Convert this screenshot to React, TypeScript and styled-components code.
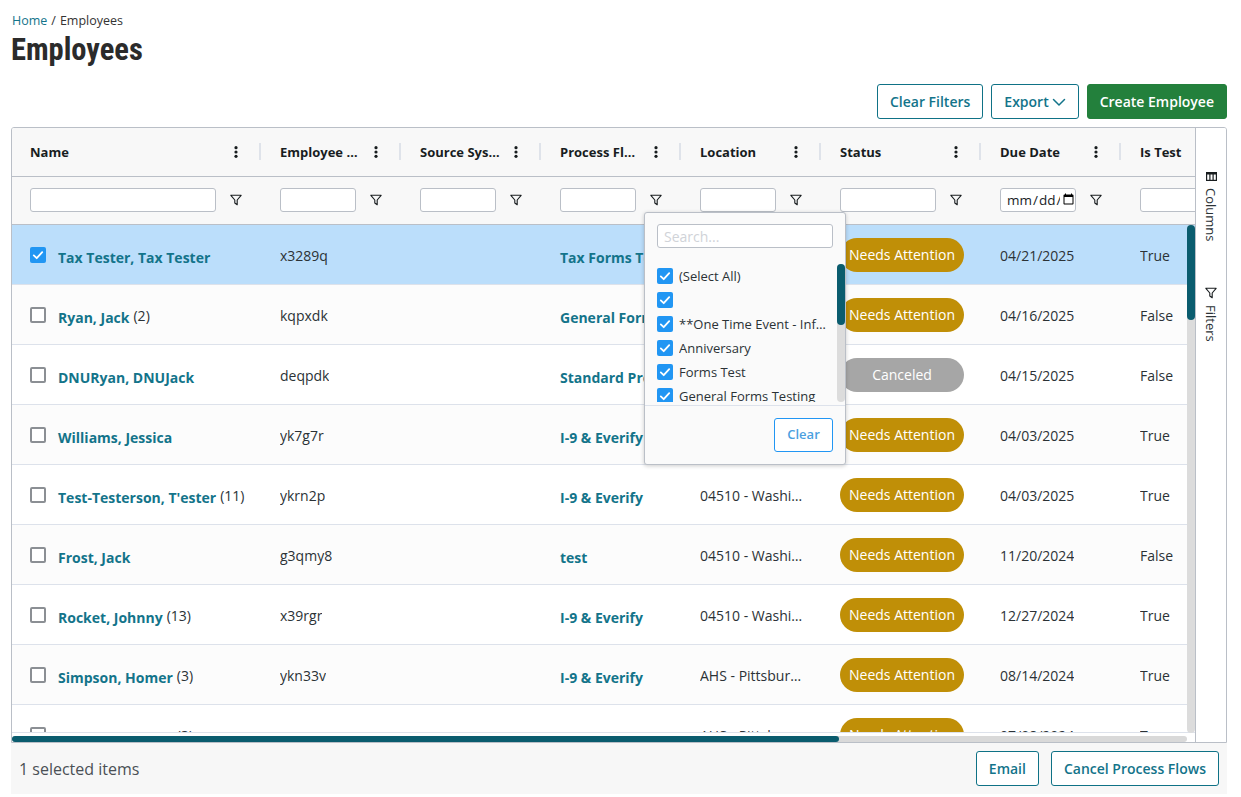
import React from "react";
import styled, { createGlobalStyle } from "styled-components";

const GlobalStyle = createGlobalStyle`
  html, body {
    margin: 0;
    padding: 0;
    background: #fff;
    font-family: "Open Sans", "Noto Sans", sans-serif;
    color: #2b2f33;
  }
  * { box-sizing: border-box; }
`;

const Page = styled.div`
  width: 1241px;
  height: 797px;
  padding: 13px 14px 0 11px;
  overflow: hidden;
`;

const Breadcrumb = styled.div`
  height: 16px;
  padding-left: 1px;
  font-size: 12.5px;
  line-height: 16px;
  display: flex;
  gap: 4px;
  color: #333;
`;

const Crumb = styled.a`
  color: #13748a;
`;

const Title = styled.h1`
  margin: 1px 0 0;
  height: 40px;
  font-family: "Roboto", "Open Sans", sans-serif;
  font-stretch: condensed;
  font-size: 30.5px;
  line-height: 40px;
  font-weight: 700;
  color: #2b2b2b;
`;

const Toolbar = styled.div`
  margin-top: 14px;
  height: 35px;
  display: flex;
  justify-content: flex-end;
  gap: 8px;
`;

const Button = styled.button<{ $primary?: boolean }>`
  height: 35px;
  padding: 0 12px;
  display: inline-flex;
  align-items: center;
  gap: 4px;
  font-family: inherit;
  font-size: 14px;
  font-weight: 600;
  border-radius: 3px;
  border: 1px solid ${(p) => (p.$primary ? "#23803c" : "#0f7286")};
  background: ${(p) => (p.$primary ? "#23803c" : "#fff")};
  color: ${(p) => (p.$primary ? "#fff" : "#13748a")};
`;

const Chevron = styled.svg`
  margin-left: -1px;
`;

const Frame = styled.div`
  position: relative;
  margin-top: 8px;
  height: 616px;
  display: flex;
  border: 1px solid #babfc7;
  border-radius: 3px 3px 0 0;
  overflow: hidden;
`;

const GridArea = styled.div`
  position: relative;
  width: 1183px;
  flex: none;
  overflow: hidden;
  display: flex;
  flex-direction: column;
`;

const HeadRow = styled.div`
  display: flex;
  flex: none;
  width: max-content;
  height: 49px;
  background: #f8f8f8;
  border-bottom: 1px solid #babfc7;
`;

const FilterRow = styled.div`
  display: flex;
  flex: none;
  width: max-content;
  height: 48px;
  padding-bottom: 2px;
  background: #f8f8f8;
  border-bottom: 1px solid #babfc7;
`;

const HeadCell = styled.div<{ $w: number }>`
  position: relative;
  width: ${(p) => p.$w}px;
  flex: none;
  padding: 0 14px 0 18px;
  display: flex;
  align-items: center;
  font-size: 13px;
  font-weight: 700;
  color: #181d1f;

  &::after {
    content: "";
    position: absolute;
    right: 1px;
    top: 15px;
    width: 2px;
    height: 17px;
    background: #dfe3ea;
  }
`;

const HeadLabel = styled.span`
  flex: 1;
  min-width: 0;
  white-space: nowrap;
  overflow: hidden;
  text-overflow: ellipsis;
`;

const IconSlot = styled.span`
  flex: none;
  width: 20px;
  margin-left: 6px;
  margin-right: 2px;
  display: flex;
  justify-content: center;
  align-items: center;
`;

const FilterCell = styled.div<{ $w: number }>`
  width: ${(p) => p.$w}px;
  flex: none;
  padding: 0 14px 0 18px;
  display: flex;
  align-items: center;
`;

const FilterSlot = styled(IconSlot)`
  margin-left: 10px;
`;

const TextFilter = styled.input`
  flex: 1;
  min-width: 0;
  height: 24px;
  padding: 0 0 0 5px;
  font-family: inherit;
  font-size: 13.5px;
  color: #181d1f;
  background: #fff;
  border: 1px solid #babfc7;
  border-radius: 3px;
  outline: none;

  &::-webkit-calendar-picker-indicator {
    margin-left: 0;
    margin-right: -2px;
  }
`;

const Body = styled.div`
  flex: none;
  height: 508px;
  overflow: hidden;
  border-bottom: 1px solid #dde2eb;
`;

const Row = styled.div<{ $selected?: boolean; $odd?: boolean }>`
  display: flex;
  width: max-content;
  height: 60px;
  border-bottom: 1px solid #dde2eb;
  background: ${(p) => (p.$selected ? "#bbdefb" : p.$odd ? "#fcfcfc" : "#fff")};
`;

const Cell = styled.div<{ $w: number }>`
  width: ${(p) => p.$w}px;
  flex: none;
  padding: 0 18px;
  height: 59px;
  display: flex;
  align-items: center;
  font-size: 14px;
  white-space: nowrap;
  overflow: hidden;
  color: #2b3236;
`;

const CellText = styled.span`
  margin-top: 2px;
  overflow: hidden;
  text-overflow: ellipsis;
`;

const Check = styled.span<{ $on?: boolean }>`
  width: 16px;
  height: 16px;
  flex: none;
  display: inline-flex;
  align-items: center;
  justify-content: center;
  border-radius: 2px;
  background: ${(p) => (p.$on ? "#2196f3" : "#fff")};
  border: ${(p) => (p.$on ? "none" : "2px solid #8b8f94")};
`;

const RowLink = styled.a`
  margin-top: 6px;
  font-weight: 700;
  color: #13748a;
`;

const NameLink = styled(RowLink)`
  margin-left: 12px;
`;

const Count = styled.span`
  margin-top: 2px;
  margin-left: 4px;
  font-size: 14px;
`;

const Pill = styled.span<{ $gray?: boolean }>`
  width: 124px;
  height: 34px;
  flex: none;
  border-radius: 17px;
  display: flex;
  align-items: center;
  justify-content: center;
  font-size: 14px;
  color: #fff;
  background: ${(p) => (p.$gray ? "#a6a6a6" : "#c08f07")};
`;

const VTrack = styled.div`
  position: absolute;
  top: 97px;
  right: 0;
  width: 8px;
  height: 508px;
  border-radius: 4px;
  background: #dcdcdc;
`;

const VThumb = styled.div`
  width: 8px;
  height: 95px;
  border-radius: 4px;
  background: #0a5c6e;
`;

const HTrack = styled.div`
  position: absolute;
  left: 0;
  bottom: 0;
  width: 1175px;
  height: 6px;
  border-radius: 3px;
  background: #d9d9d9;
`;

const HThumb = styled.div`
  width: 827px;
  height: 6px;
  border-radius: 3px;
  background: #0a5c6e;
`;

const SideBar = styled.div`
  flex: 1;
  border-left: 1px solid #babfc7;
  background: #fff;
  display: flex;
  flex-direction: column;
  align-items: center;
  padding-top: 43px;
  gap: 46px;
`;

const SideTab = styled.div`
  writing-mode: vertical-rl;
  display: flex;
  align-items: center;
  gap: 6px;
  font-size: 13px;
  color: #2b3236;
`;

const Footer = styled.div`
  height: 51px;
  background: #f7f7f7;
  padding: 8px 8px 8px 8px;
  display: flex;
  align-items: center;
  gap: 12px;
`;

const SelectedText = styled.span`
  flex: 1;
  font-size: 16px;
  color: #4a5055;
`;

const Popup = styled.div`
  position: absolute;
  left: 632px;
  top: 84px;
  width: 202px;
  height: 253px;
  background: #fafafa;
  border: 1px solid #babfc7;
  border-radius: 3px;
  box-shadow: 0 1px 4px rgba(0, 0, 0, 0.2);
  z-index: 3;
  display: flex;
  flex-direction: column;
`;

const PopupSearch = styled.input`
  display: block;
  margin: 11px 12px 16px;
  height: 24px;
  flex: none;
  padding: 0 6px;
  font-family: inherit;
  font-size: 14px;
  background: #fff;
  border: 1px solid #babfc7;
  border-radius: 3px;
  outline: none;

  &::placeholder {
    color: #d0d3d8;
  }
`;

const PopupList = styled.div`
  position: relative;
  height: 138px;
  flex: none;
  overflow: hidden;
`;

const PopupItem = styled.div`
  height: 24px;
  padding-left: 12px;
  display: flex;
  align-items: center;
  gap: 6px;
  font-size: 13px;
  color: #2b3236;
  white-space: nowrap;
`;

const ItemLabel = styled.span`
  width: 148px;
  overflow: hidden;
  text-overflow: ellipsis;
`;

const ListTrack = styled.div`
  position: absolute;
  top: 0;
  right: 0;
  width: 8px;
  height: 138px;
  border-radius: 4px;
  background: #dcdcdc;
`;

const ListThumb = styled.div`
  width: 8px;
  height: 61px;
  border-radius: 4px;
  background: #0a5c6e;
`;

const PopupFooter = styled.div`
  margin-top: 3px;
  flex: 1;
  border-top: 1px solid #dde2eb;
  padding: 12px 12px 0;
  display: flex;
  justify-content: flex-end;
  align-items: flex-start;
`;

const ClearButton = styled.button`
  width: 59px;
  height: 34px;
  padding: 0 0 2px;
  font-family: inherit;
  font-size: 13px;
  font-weight: 600;
  color: #4b9fe0;
  background: #fff;
  border: 1px solid #2196f3;
  border-radius: 3px;
`;

const FunnelIcon = () => (
  <svg width="12" height="12" viewBox="0 0 14 14" fill="none" stroke="#181d1f" strokeWidth="1.3" strokeLinejoin="round">
    <path d="M1 1.5h12L8.4 7v5.5L5.6 10.5V7z" />
  </svg>
);

const DotsIcon = () => (
  <svg width="4" height="12" viewBox="0 0 4 12" fill="#181d1f">
    <circle cx="2" cy="1.7" r="1.6" />
    <circle cx="2" cy="6" r="1.6" />
    <circle cx="2" cy="10.3" r="1.6" />
  </svg>
);

const Tick = () => (
  <svg width="12" height="12" viewBox="0 0 12 12" fill="none" stroke="#fff" strokeWidth="1.8" strokeLinecap="round" strokeLinejoin="round">
    <path d="M1.8 6.4l2.9 2.8 5.5-6" />
  </svg>
);

type Employee = {
  name: string;
  count?: number;
  id: string;
  flow: string;
  location: string;
  status: string;
  due: string;
  isTest: string;
  selected?: boolean;
};

const widths = [250, 140, 140, 140, 140, 160, 140, 140];
const heads = ["Name", "Employee ID", "Source System", "Process Flow", "Location", "Status", "Due Date", "Is Test"];

const employees: Employee[] = [
  { name: "Tax Tester, Tax Tester", id: "x3289q", flow: "Tax Forms Test", location: "04510 - Washington", status: "Needs Attention", due: "04/21/2025", isTest: "True", selected: true },
  { name: "Ryan, Jack", count: 2, id: "kqpxdk", flow: "General Forms", location: "04510 - Washington", status: "Needs Attention", due: "04/16/2025", isTest: "False" },
  { name: "DNURyan, DNUJack", id: "deqpdk", flow: "Standard Process", location: "04510 - Washington", status: "Canceled", due: "04/15/2025", isTest: "False" },
  { name: "Williams, Jessica", id: "yk7g7r", flow: "I-9 & Everify", location: "04510 - Washington", status: "Needs Attention", due: "04/03/2025", isTest: "True" },
  { name: "Test-Testerson, T'ester", count: 11, id: "ykrn2p", flow: "I-9 & Everify", location: "04510 - Washington", status: "Needs Attention", due: "04/03/2025", isTest: "True" },
  { name: "Frost, Jack", id: "g3qmy8", flow: "test", location: "04510 - Washington", status: "Needs Attention", due: "11/20/2024", isTest: "False" },
  { name: "Rocket, Johnny", count: 13, id: "x39rgr", flow: "I-9 & Everify", location: "04510 - Washington", status: "Needs Attention", due: "12/27/2024", isTest: "True" },
  { name: "Simpson, Homer", count: 3, id: "ykn33v", flow: "I-9 & Everify", location: "AHS - Pittsburgh", status: "Needs Attention", due: "08/14/2024", isTest: "True" },
  { name: "Simpson, Homer", count: 3, id: "xqmrwz", flow: "test", location: "AHS - Pittsburgh", status: "Needs Attention", due: "07/08/2024", isTest: "True" },
];

const filterValues = ["(Select All)", "", "**One Time Event - Informational", "Anniversary", "Forms Test", "General Forms Testing"];

const App: React.FC = () => {
  return (
    <Page>
      <GlobalStyle />
      <Breadcrumb>
        <Crumb>Home</Crumb>
        <span>/</span>
        <span>Employees</span>
      </Breadcrumb>
      <Title>Employees</Title>
      <Toolbar>
        <Button>Clear Filters</Button>
        <Button>
          Export
          <Chevron width="14" height="14" viewBox="0 0 14 14" fill="none" stroke="#13748a" strokeWidth="1.5" strokeLinecap="round" strokeLinejoin="round">
            <path d="M1.5 4.5L7 10l5.5-5.5" />
          </Chevron>
        </Button>
        <Button $primary>Create Employee</Button>
      </Toolbar>
      <Frame>
        <GridArea>
          <HeadRow>
            {heads.map((h, i) => (
              <HeadCell key={h} $w={widths[i]}>
                <HeadLabel>{h}</HeadLabel>
                <IconSlot>
                  <DotsIcon />
                </IconSlot>
              </HeadCell>
            ))}
          </HeadRow>
          <FilterRow>
            {heads.map((h, i) => (
              <FilterCell key={h} $w={widths[i]}>
                <TextFilter type={h === "Due Date" ? "date" : "text"} />
                <FilterSlot>
                  <FunnelIcon />
                </FilterSlot>
              </FilterCell>
            ))}
          </FilterRow>
          <Body>
            {employees.map((e, i) => (
              <Row key={e.id} $selected={e.selected} $odd={i % 2 === 1}>
                <Cell $w={widths[0]}>
                  <Check $on={e.selected}>{e.selected && <Tick />}</Check>
                  <NameLink>{e.name}</NameLink>
                  {e.count !== undefined && <Count>({e.count})</Count>}
                </Cell>
                <Cell $w={widths[1]}>
                  <CellText>{e.id}</CellText>
                </Cell>
                <Cell $w={widths[2]} />
                <Cell $w={widths[3]}>
                  <RowLink>{e.flow}</RowLink>
                </Cell>
                <Cell $w={widths[4]}>
                  <CellText>{e.location}</CellText>
                </Cell>
                <Cell $w={widths[5]}>
                  <Pill $gray={e.status === "Canceled"}>{e.status}</Pill>
                </Cell>
                <Cell $w={widths[6]}>
                  <CellText>{e.due}</CellText>
                </Cell>
                <Cell $w={widths[7]}>
                  <CellText>{e.isTest}</CellText>
                </Cell>
              </Row>
            ))}
          </Body>
          <VTrack>
            <VThumb />
          </VTrack>
          <HTrack>
            <HThumb />
          </HTrack>
        </GridArea>
        <SideBar>
          <SideTab>
            <svg width="11" height="11" viewBox="0 0 11 11" fill="none" stroke="#181d1f" strokeWidth="1.2">
              <rect x="0.6" y="1.6" width="9.8" height="7.8" />
              <path d="M0.6 2.6h9.8" strokeWidth="2" />
              <path d="M3.9 2v7.4M7.1 2v7.4" />
            </svg>
            Columns
          </SideTab>
          <SideTab>
            <svg width="12" height="12" viewBox="0 0 14 14" fill="none" stroke="#181d1f" strokeWidth="1.3" strokeLinejoin="round">
              <path d="M1 1.5h12L8.4 7v5.5L5.6 10.5V7z" />
            </svg>
            Filters
          </SideTab>
        </SideBar>
        <Popup>
          <PopupSearch placeholder="Search..." />
          <PopupList>
            {filterValues.map((v) => (
              <PopupItem key={v}>
                <Check $on>
                  <Tick />
                </Check>
                <ItemLabel>{v}</ItemLabel>
              </PopupItem>
            ))}
            <ListTrack>
              <ListThumb />
            </ListTrack>
          </PopupList>
          <PopupFooter>
            <ClearButton>Clear</ClearButton>
          </PopupFooter>
        </Popup>
      </Frame>
      <Footer>
        <SelectedText>1 selected items</SelectedText>
        <Button>Email</Button>
        <Button>Cancel Process Flows</Button>
      </Footer>
    </Page>
  );
};

export default App;
